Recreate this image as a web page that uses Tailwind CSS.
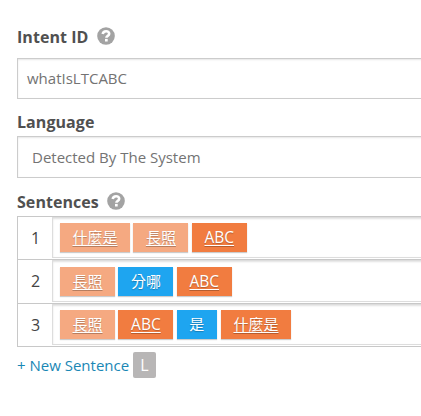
<!DOCTYPE html>
<html lang="en">
<head>
<meta charset="utf-8">
<title>Intent</title>
<script src="https://cdn.jsdelivr.net/npm/@tailwindcss/browser@4"></script>
</head>
<body class="bg-white overflow-hidden w-[421px] h-[416px] font-['Open_Sans','Noto_Sans_CJK_TC',sans-serif] text-[15px] leading-[20px] text-[#737373]">
<main class="pl-[17px] pt-[27px] flex flex-col">
  <div class="h-[31px] flex items-start font-bold text-[16px] tracking-[0.06px] text-[#505050]">
    <span class="w-[79.5px] whitespace-nowrap">Intent ID</span>
    <svg class="w-[18px] h-[18px]" viewBox="0 0 18 18"><circle cx="9" cy="9" r="8.8" fill="#a3a3a3"/><path d="M5.7 7C6 5 7.4 4.3 9.1 4.3c1.9 0 3.1 1 3.1 2.5 0 2.1-2.8 2-2.8 3.9" fill="none" stroke="#fff" stroke-width="2.6"/><path d="M8 11.9h2.7v2.6H8z" fill="#fff"/></svg>
  </div>
  <div class="h-[41px] w-[420px] border border-[#ccc] shadow-[inset_0_1px_2px_rgba(0,0,0,0.1)] pl-[9px] pb-[2px] flex items-center"><span>whatIsLTCABC</span></div>
  <div class="h-[37px] pt-[13px] font-bold text-[16px] tracking-[0.06px] text-[#505050]">Language</div>
  <div class="h-[42px] w-[420px] border border-[#ccc] shadow-[inset_0_1px_2px_rgba(0,0,0,0.1)] pl-[14px] flex items-center"><span>Detected By The System</span></div>
  <div class="h-[38px] pt-[14px] flex items-start font-bold text-[16px] tracking-[0.06px] text-[#505050]">
    <span class="w-[90px] whitespace-nowrap">Sentences</span>
    <svg class="w-[18px] h-[18px]" viewBox="0 0 18 18"><circle cx="9" cy="9" r="8.8" fill="#a3a3a3"/><path d="M5.7 7C6 5 7.4 4.3 9.1 4.3c1.9 0 3.1 1 3.1 2.5 0 2.1-2.8 2-2.8 3.9" fill="none" stroke="#fff" stroke-width="2.6"/><path d="M8 11.9h2.7v2.6H8z" fill="#fff"/></svg>
  </div>
  <div class="w-[420px] border border-[#c8c8c8] text-white">
    <div class="h-[43px] border-b border-[#c8c8c8] flex">
      <div class="w-[34px] text-[#444] text-[16px] text-center leading-[42px] pl-[1px]">1</div>
      <div class="h-[41px] flex-1 border border-[#ddd] shadow-[inset_0_1px_2px_rgba(0,0,0,0.12)] pl-[7px] pt-[5px] flex gap-[3.4px] leading-[29px] text-center [text-shadow:0_1px_1px_rgba(0,0,0,0.25)]">
        <span class="w-[70px] h-[29px] bg-[#f5a981] shadow-[0_1px_1px_rgba(0,0,0,0.2)] underline underline-offset-2">什麼是</span>
        <span class="w-[55px] h-[29px] bg-[#f5a981] shadow-[0_1px_1px_rgba(0,0,0,0.2)] underline underline-offset-2">長照</span>
        <span class="w-[55px] h-[29px] bg-[#f17c40] shadow-[0_1px_1px_rgba(0,0,0,0.2)] underline underline-offset-2 text-[15.5px]">ABC</span>
      </div>
    </div>
    <div class="h-[44px] border-b border-[#c8c8c8] flex">
      <div class="w-[34px] text-[#444] text-[16px] text-center leading-[42px] pl-[1px]">2</div>
      <div class="h-[42px] flex-1 border border-[#ddd] shadow-[inset_0_1px_2px_rgba(0,0,0,0.12)] pl-[7px] pt-[6px] flex gap-[3.4px] leading-[29px] text-center [text-shadow:0_1px_1px_rgba(0,0,0,0.25)]">
        <span class="w-[55px] h-[29px] bg-[#f5a981] shadow-[0_1px_1px_rgba(0,0,0,0.2)] underline underline-offset-2">長照</span>
        <span class="w-[55px] h-[29px] bg-[#1ea5f0] shadow-[0_1px_1px_rgba(0,0,0,0.2)]">分哪</span>
        <span class="w-[55px] h-[29px] bg-[#f17c40] shadow-[0_1px_1px_rgba(0,0,0,0.2)] underline underline-offset-2 text-[15.5px]">ABC</span>
      </div>
    </div>
    <div class="h-[42px] flex">
      <div class="w-[34px] text-[#444] text-[16px] text-center leading-[42px] pl-[1px]">3</div>
      <div class="h-[41px] flex-1 border border-[#ddd] shadow-[inset_0_1px_2px_rgba(0,0,0,0.12)] pl-[7px] pt-[5px] flex gap-[3.4px] leading-[29px] text-center [text-shadow:0_1px_1px_rgba(0,0,0,0.25)]">
        <span class="w-[55px] h-[29px] bg-[#f5a981] shadow-[0_1px_1px_rgba(0,0,0,0.2)] underline underline-offset-2">長照</span>
        <span class="w-[55px] h-[29px] bg-[#f17c40] shadow-[0_1px_1px_rgba(0,0,0,0.2)] underline underline-offset-2 text-[15.5px]">ABC</span>
        <span class="w-[40px] h-[29px] bg-[#1ea5f0] shadow-[0_1px_1px_rgba(0,0,0,0.2)]">是</span>
        <span class="w-[70px] h-[29px] ml-[0.8px] bg-[#f17c40] shadow-[0_1px_1px_rgba(0,0,0,0.2)] underline underline-offset-2">什麼是</span>
      </div>
    </div>
  </div>
  <div class="pt-[5px] flex items-center text-[#1a87b5]">
    <span class="w-[116px] whitespace-nowrap">+ New Sentence</span>
    <span class="w-[23px] h-[26px] rounded-[2px] bg-[#b8b6b6] text-white text-[16px] text-center leading-[27px]">L</span>
  </div>
</main>
</body>
</html>
